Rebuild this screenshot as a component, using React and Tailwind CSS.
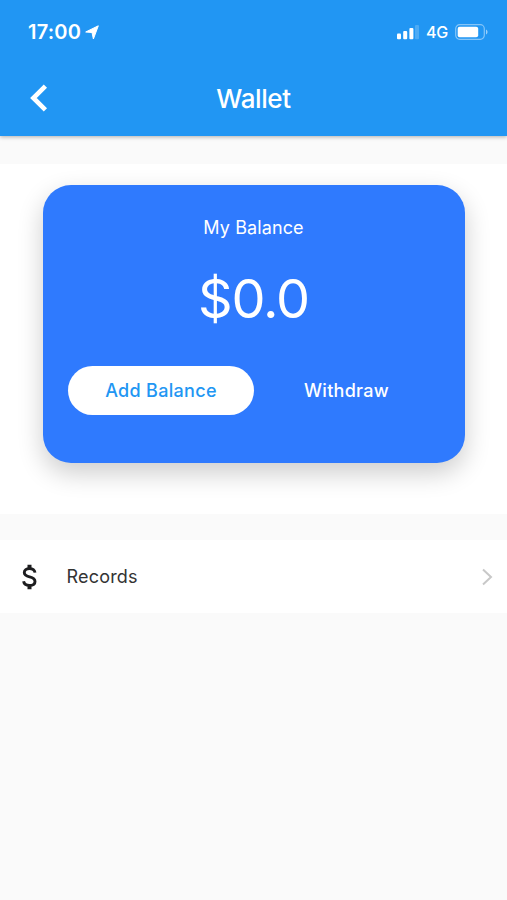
import React from "react";

function StatusBar() {
  return (
    <div className="flex h-16 items-center justify-between pl-7 pr-[19px]">
      <div className="flex items-center gap-1">
        <span className="text-[20px] font-semibold leading-6 tracking-[0.2px]">17:00</span>
        <svg className="h-[15px] w-[14px]" viewBox="0 0 14 15" fill="currentColor" stroke="currentColor" strokeLinejoin="round">
          <path d="M13.3 0.8L0.7 7L7 7.5L8.4 14Z" />
        </svg>
      </div>

      <div className="flex items-center gap-[7px]">
        <svg className="h-4 w-[23px]" viewBox="0 0 23 16" fill="currentColor">
          <rect x="1" y="9.5" width="4" height="5.8" rx="1" />
          <rect x="7.2" y="7" width="4" height="8.3" rx="1" />
          <rect x="13.4" y="4" width="4" height="11.3" rx="1" />
          <rect x="19" y="1" width="4" height="14.3" rx="1" opacity="0.2" />
        </svg>
        <span className="text-[16px] font-medium leading-6 tracking-[-0.2px]">4G</span>
        <svg className="h-4 w-[33px]" viewBox="0 0 33 16">
          <rect x="0.7" y="0.7" width="28.6" height="14.6" rx="4" fill="none" stroke="currentColor" strokeOpacity="0.45" strokeWidth="1.2" />
          <rect x="2.7" y="2.7" width="20.5" height="10.6" rx="2" fill="currentColor" />
          <path d="M31 5.5C33 6.3 33 9.7 31 10.5Z" fill="currentColor" opacity="0.55" />
        </svg>
      </div>
    </div>
  );
}

function Header() {
  return (
    <header className="relative z-10 h-[135.5px] bg-[#2196f3] text-white shadow-[0_1px_4px_rgba(0,0,0,0.3)]">
      <StatusBar />
      <div className="grid h-[68px] grid-cols-[1fr_auto_1fr] items-center">
        <button className="w-16 pl-[30px]" aria-label="Back">
          <svg className="h-[28px] w-[18px]" viewBox="0 0 18 28" fill="none" stroke="currentColor" strokeWidth="4.6">
            <path d="M15.4 2.2L3.4 14L15.4 25.8" />
          </svg>
        </button>
        <h1 className="text-[26px] font-medium tracking-[-0.4px]">Wallet</h1>
      </div>
    </header>
  );
}

function BalanceCard() {
  return (
    <section className="mt-7 h-[350px] bg-white px-[42.5px] pt-[21.5px]">
      <div className="flex h-[278px] flex-col rounded-[28px] bg-[#2f7afe] px-[25.5px] text-white shadow-[0_10px_26px_rgba(0,0,0,0.2)]">
        <p className="mt-[31px] text-center text-[18px] leading-6 tracking-[0.1px]">My Balance</p>
        <p className="mt-[24px] text-center text-[54px] font-normal leading-[70px] tracking-[-1.2px]">$0.0</p>
        <div className="mt-[32px] grid grid-cols-2">
          <button className="h-[49px] w-[186px] rounded-full bg-white text-[18px] font-medium tracking-[0.3px] text-[#2196f3]">
            Add Balance
          </button>
          <button className="h-[49px] w-[186px] text-[18px] font-medium tracking-[0.3px]">Withdraw</button>
        </div>
      </div>
    </section>
  );
}

function RecordsRow() {
  return (
    <div className="mt-[26.5px] flex h-[73px] items-center bg-white pl-[22px] pr-[14px]">
      <svg className="h-[26px] w-[15px] text-[#1d1d1f]" viewBox="0 0 15 26" fill="none" stroke="currentColor" strokeWidth="2.9">
        <path d="M13 8.6C12.6 6 10.5 4.6 7.5 4.6C4.4 4.6 2.3 6.1 2.3 8.5C2.3 11.2 4.5 12.1 7.6 12.9C11 13.8 13 14.9 13 17.4C13 20 10.7 21.4 7.5 21.4C4.3 21.4 2 19.9 1.6 17.2" />
        <path d="M7.5 0.8V5M7.5 21V25.2" strokeWidth="4" />
      </svg>
      <span className="ml-[29.5px] text-[18px] tracking-[0.2px] text-[#333333]">Records</span>
      <svg className="ml-auto h-[18px] w-[12px] text-[#c8c8c8]" viewBox="0 0 12 18" fill="none" stroke="currentColor" strokeWidth="2">
        <path d="M2 1.5L10 9L2 16.5" />
      </svg>
    </div>
  );
}

function App() {
  return (
    <div className="h-[900px] w-full overflow-hidden bg-[#fafafa] font-['Inter',sans-serif]">
      <Header />
      <BalanceCard />
      <RecordsRow />
    </div>
  );
}

export default App;
